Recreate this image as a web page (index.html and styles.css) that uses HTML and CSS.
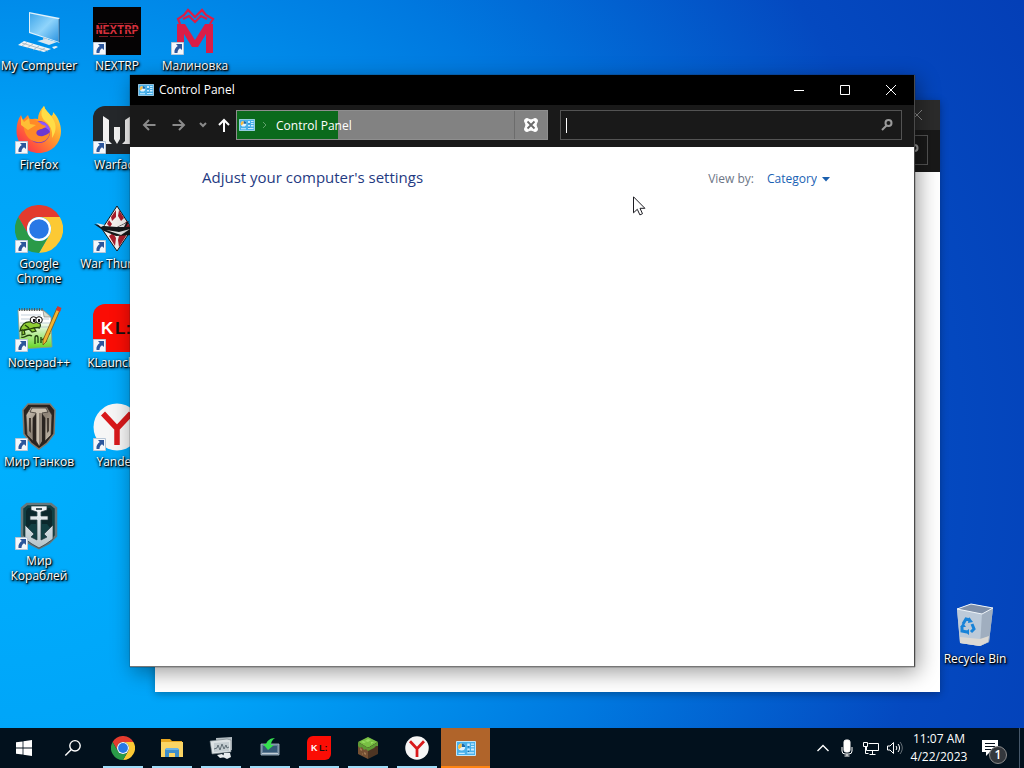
FILE: index.html
```html
<!DOCTYPE html>
<html lang="en">
<head>
    <meta charset="UTF-8">
    <meta name="viewport" content="width=device-width, initial-scale=1.0">
    <title>Control Panel</title>
    <link rel="stylesheet" href="styles.css">
</head>
<body>
    <!-- Shared icons -->
    <svg class="sprite" aria-hidden="true">
        <defs>
            <linearGradient id="screen" x1="0" y1="0" x2="1" y2="1">
                <stop offset="0" stop-color="#3fa6ea"/>
                <stop offset=".5" stop-color="#8fd4fb"/>
                <stop offset="1" stop-color="#2b93e0"/>
            </linearGradient>
            <linearGradient id="flame" x1="1" y1="0" x2="0" y2="1">
                <stop offset="0" stop-color="#fff04a"/>
                <stop offset=".4" stop-color="#ffa02c"/>
                <stop offset=".75" stop-color="#ff4f3f"/>
                <stop offset="1" stop-color="#e3206c"/>
            </linearGradient>
            <linearGradient id="steel" x1="0" y1="0" x2="1" y2="1">
                <stop offset="0" stop-color="#d3cabc"/>
                <stop offset=".5" stop-color="#8d8276"/>
                <stop offset="1" stop-color="#c8bdae"/>
            </linearGradient>
            <linearGradient id="silver" x1="0" y1="0" x2="0" y2="1">
                <stop offset="0" stop-color="#f4f8fa"/>
                <stop offset="1" stop-color="#b3c2c8"/>
            </linearGradient>
            <linearGradient id="page" x1="0" y1="0" x2="0" y2="1">
                <stop offset=".3" stop-color="#ffffff"/>
                <stop offset="1" stop-color="#62d51f"/>
            </linearGradient>
        </defs>
        <symbol id="shortcut" viewBox="0 0 13 13">
            <path fill="#f4f7fb" stroke="#b8c6d6" d="M.5.5h12v12H.5z"/>
            <path fill="#2c569c" d="M5 2h6v6L9 6.200C7 7.500 6.500 9 6.500 11H3.500C3 8 4.500 5.500 6.800 4z"/>
        </symbol>
        <symbol id="chrome" viewBox="0 0 48 48">
            <path fill="#e33b2e" d="M24 12h20.800A24 24 0 0 0 3.200 12l10.400 18A12 12 0 0 1 24 12z"/>
            <path fill="#fcc934" d="M24 12h20.800A24 24 0 0 1 24 48l10.400-18A12 12 0 0 0 24 12z"/>
            <path fill="#2a9a48" d="M3.200 12A24 24 0 0 0 24 48l10.400-18A12 12 0 0 1 13.600 30z"/>
            <circle cx="24" cy="24" r="12" fill="#fff"/>
            <circle cx="24" cy="24" r="9.800" fill="#2878e6"/>
        </symbol>
        <symbol id="yandex" viewBox="0 0 48 48">
            <circle cx="24" cy="24" r="23.500" fill="#f6f6f6"/>
            <path fill="none" stroke="#d8191b" stroke-width="5.500" d="M10 10.500 24 25.500 38 10.500M24 24v18"/>
        </symbol>
        <symbol id="panel" viewBox="0 0 16 12">
            <path fill="#48b0ea" stroke="#bfe6fb" stroke-width=".8" d="M.4.400h15.200v11.200H.4z"/>
            <circle cx="4.500" cy="4.800" r="2.800" fill="#dff3ff"/>
            <path fill="#1667a8" d="M4.500 4.800V2a2.800 2.800 0 0 1 2.800 2.800z"/>
            <path fill="#f4b942" d="M4.500 4.800 2.300 6.600A2.800 2.800 0 0 1 4.500 2z"/>
            <path fill="#c9ebff" d="M9 2h2v2H9zm3 0h2.500v1H12zm0 2h2.500v1H12zM9 6h2v1.500H9zm3 0h2.500v1.500H12zM2 9.300h5v1H2zm7-.3h5.500v1H9z"/>
            <path fill="#1667a8" d="M9.500 4.200h1v1h-1zm0 3.500h1v1h-1z"/>
        </symbol>
        <symbol id="magnifier" viewBox="0 0 14 14">
            <g fill="none" stroke="#9a9a9a" stroke-width="2">
                <circle cx="8.500" cy="5" r="3"/>
                <path d="M6.500 7.500 2 12"/>
            </g>
        </symbol>
    </svg>

    <main class="desktop">
        <div class="icon-columns">
            <div class="icon-column">
                <button class="desktop-icon" type="button">
                    <span class="picture">
                        <svg viewBox="0 0 48 48">
                            <path fill="#dff1fb" d="m14 5 31 6v25L14 26z"/>
                            <path fill="url(#screen)" d="m15 6.500 28.500 5.700v22.600L15 25z"/>
                            <path fill="#1f6ea8" d="M43.500 12.200 45 11v25l-1.500-1.200z"/>
                            <path fill="#b7ccdb" d="m28 30 5 2v3l-5-1.500z"/>
                            <path fill="#dce7ee" d="m22 34 9-2 11 3-8 3z"/>
                            <path fill="#f0f4f6" d="m3 38 6-4 27 8-7 3z"/>
                            <path fill="none" stroke="#9eb2bf" stroke-width=".8" d="m7 36 26 8M12 35.500 7 39m11-2-6 4m12-2-6 4m12-2-6 3"/>
                            <path fill="#e9eff3" d="m37 40 4-1 2 1-4 2z"/>
                        </svg>
                    </span>
                    <span class="label">My Computer</span>
                </button>
                <button class="desktop-icon" type="button">
                    <span class="picture">
                        <svg viewBox="0 0 48 48">
                            <path fill="url(#flame)" d="M29 0c1 4 4 6 7 10 2-1 2-2 2-4 5 5 8 12 8 19 0 13-10 22-22 22S1.500 38 1.500 25C1.500 18 3 13 6 9l2 5 5-5 2 5c4-2 8-1 8-1 0-5 2-9 6-13z"/>
                            <circle cx="24" cy="26" r="11" fill="#6d38d0"/>
                            <path fill="#9059ff" d="M19 17c7-4 17 1 16 9-2-4-6-5-9-5z"/>
                            <path fill="#ff8a27" d="M8 14c4-2 12-2 17 3 2 2 4 2 6 3-1 3-7 3-9 5-2 3 1 6 6 5 4-1 6-3 7-4-1 8-7 11-13 10C13 35 8 27 8 14z"/>
                            <path fill="#ffdd46" d="M29 0c1 4 4 6 7 10 6 7 6 15 1 22 1-8-2-13-7-17-5-5-4-10-1-15z"/>
                            <path fill="#ffbe35" d="M6 11l3 5 5-4 1 6 6 1-8 5-7-5z"/>
                        </svg>
                        <svg class="badge"><use href="#shortcut"/></svg>
                    </span>
                    <span class="label">Firefox</span>
                </button>
                <button class="desktop-icon" type="button">
                    <span class="picture">
                        <svg><use href="#chrome"/></svg>
                        <svg class="badge"><use href="#shortcut"/></svg>
                    </span>
                    <span class="label">Google Chrome</span>
                </button>
                <button class="desktop-icon" type="button">
                    <span class="picture">
                        <svg viewBox="0 0 48 48">
                            <path fill="url(#page)" stroke="#8f9a86" stroke-width=".8" d="M3 6h25l8 7 1 30-32 2z"/>
                            <path fill="#d7dccf" stroke="#777" stroke-width=".6" d="m28 6 1 7h7z"/>
                            <path fill="none" stroke="#555" stroke-dasharray="1 1.500" stroke-width="3" d="M4 5.500h24"/>
                            <path fill="none" stroke="#a9bbcb" stroke-width=".7" d="M6 11h20M6 15h28M5 19h31M5 23h31"/>
                            <path fill="#8fcd35" stroke="#23410d" stroke-width="1.200" d="M5 27c1-6 5-10 11-9 5-2 11 1 9 5l-6 1 2 3-4 1-3-3-5 1 1 4-3 1 0-5z"/>
                            <path fill="none" stroke="#23410d" stroke-width="1.300" d="M7 26c5 2 9-4 18-2M10 21l4 3M6 33c4 2 6-4 11-1"/>
                            <circle cx="18.500" cy="16" r="3.300" fill="#fff" stroke="#111"/>
                            <circle cx="24" cy="16" r="3.300" fill="#fff" stroke="#111"/>
                            <path fill="#111" d="M18 15h2v3h-2zm5 0h2v3h-2z"/>
                            <path fill="none" stroke="#173c08" stroke-width="1.300" d="M20 40v-6c0-3 3-3 3 0v5m3-6v6m1-3c3-3 4-2 4 2m2-7 2-2"/>
                            <path fill="#f2b431" stroke="#7a5313" stroke-width=".8" d="M42 4l3 2-14 32-3 3v-5z"/>
                            <path fill="#d63a2d" d="m42.500 2 4 2-1.500 4-4-2z"/>
                        </svg>
                        <svg class="badge"><use href="#shortcut"/></svg>
                    </span>
                    <span class="label">Notepad++</span>
                </button>
                <button class="desktop-icon" type="button">
                    <span class="picture">
                        <svg viewBox="0 0 48 48">
                            <path fill="#29231f" stroke="#82786c" stroke-width="1.500" d="M13 1h22l5 6-1 24-7 9-8 6-8-6-7-9L8 7z"/>
                            <path fill="url(#steel)" stroke="#2d2722" stroke-width=".7" d="m11 12 5-8h16l5 8-1 20-6 6V15l-3-4h-6l-3 4v23l-6-6z"/>
                            <path fill="#c9bfb0" stroke="#2d2722" stroke-width=".7" d="M17 5h14l2 4-6 1v28l-3 5-3-5V10l-6-1z"/>
                            <path fill="#453c34" d="M14 15h2v15l-2-2zm18 0h2v13l-2 2z"/>
                            <path fill="#8d8276" d="M24 10h3v28l-3 5z"/>
                        </svg>
                        <svg class="badge"><use href="#shortcut"/></svg>
                    </span>
                    <span class="label">Мир Танков</span>
                </button>
                <button class="desktop-icon" type="button">
                    <span class="picture">
                        <svg viewBox="0 0 48 48">
                            <path fill="#123f43" stroke="#66777b" stroke-width="2.500" d="M12 2h24l5 4v28l-7 7-10 5-10-5-7-7V6z"/>
                            <path fill="#0b282c" d="M13 6h8v16h-5l-5 6V9zm22 0h-8v16h5l5 6V9z"/>
                            <path fill="url(#silver)" stroke="#22373d" stroke-width=".7" d="M16 4h16v4l-6 2v4h7v4h-7v20l6-3-3-3 9-9v14l-7 5-7 4-7-4-7-5V23l9 9-3 3 6 3V18h-7v-4h7v-4l-6-2z"/>
                            <path fill="#44565c" d="M21 6h6v2h-6z"/>
                        </svg>
                        <svg class="badge"><use href="#shortcut"/></svg>
                    </span>
                    <span class="label">Мир Кораблей</span>
                </button>
            </div>

            <div class="icon-column">
                <button class="desktop-icon" type="button">
                    <span class="picture">
                        <svg viewBox="0 0 48 48">
                            <path fill="#050304" d="M0 0h48v48H0z"/>
                            <text x="24" y="27" text-anchor="middle" font-family="Liberation Mono, monospace" font-size="12" font-weight="700" fill="#d6303c">NEXTRP</text>
                            <path fill="none" stroke="#7d1a22" stroke-dasharray="9 2 14 1" d="M5 16.500h38M6 29.500h37"/>
                            <path fill="none" stroke="#050304" stroke-width=".7" d="M3 22.500h42"/>
                        </svg>
                        <svg class="badge"><use href="#shortcut"/></svg>
                    </span>
                    <span class="label">NEXTRP</span>
                </button>
                <button class="desktop-icon" type="button">
                    <span class="picture">
                        <svg viewBox="0 0 48 48">
                            <path fill="#25282b" d="M12 0h36v48H0V12A12 12 0 0 1 12 0z"/>
                            <path fill="#f1f1f1" d="m10 10 6 4v21l3 3H10zM38 10l-6 4v21l-3 3h9zM21 21h6v12l-3 5-3-5z"/>
                        </svg>
                        <svg class="badge"><use href="#shortcut"/></svg>
                    </span>
                    <span class="label">Warface</span>
                </button>
                <button class="desktop-icon" type="button">
                    <span class="picture">
                        <svg viewBox="0 0 48 48">
                            <path fill="#f4f1ef" stroke="#181516" d="m24 1 15 23-15 22L9 24z"/>
                            <path fill="#a61c2b" d="m23 5 0 7-4 4-1-4zm3 0 5 8-3 3-3-5zM14 19l2-4 3 4-2 3zm20-3 3 6-4 2-3-4zM16 31l4-3 3 5-1 8zm10 0 6-3 1 3-7 11-1-7z"/>
                            <path fill="#15171a" d="m1 19 10 2 13 1 12-6-3 6 15-2v7l-8 3-17 1-12-5z"/>
                            <path fill="#e5e5e5" d="m3 18 9 2-4 2zm10 7 13 2 11-3-9 6zM25 22l8-4-2 4z"/>
                        </svg>
                        <svg class="badge"><use href="#shortcut"/></svg>
                    </span>
                    <span class="label">War Thunder</span>
                </button>
                <button class="desktop-icon" type="button">
                    <span class="picture">
                        <svg viewBox="0 0 48 48">
                            <path fill="#fb0d05" d="M12 0h36v36a12 12 0 0 1-12 12H0V12A12 12 0 0 1 12 0z"/>
                            <text x="8" y="30" font-family="Liberation Sans, sans-serif" font-size="17" font-weight="700" fill="#fff">K <tspan x="22" fill="#16100f">L:</tspan></text>
                        </svg>
                        <svg class="badge"><use href="#shortcut"/></svg>
                    </span>
                    <span class="label">KLauncher</span>
                </button>
                <button class="desktop-icon" type="button">
                    <span class="picture">
                        <svg><use href="#yandex"/></svg>
                        <svg class="badge"><use href="#shortcut"/></svg>
                    </span>
                    <span class="label">Yandex</span>
                </button>
            </div>

            <div class="icon-column">
                <button class="desktop-icon" type="button">
                    <span class="picture">
                        <svg viewBox="0 0 48 48">
                            <path fill="#d91e48" d="M6 17h8l10 16 10-16h8v29h-7V27l-8 13h-6l-8-13v19H6z"/>
                            <path fill="none" stroke="#d91e48" stroke-width="2.200" d="M9 17 7 12l6-4 4-5 7 7 7-7 4 5 7 4-3 5M12 12l6-3 6 6 6-6 6 3"/>
                        </svg>
                        <svg class="badge"><use href="#shortcut"/></svg>
                    </span>
                    <span class="label">Малиновка</span>
                </button>
            </div>
        </div>

        <button class="desktop-icon recycle-bin" type="button">
            <span class="picture">
                <svg viewBox="0 0 48 48">
                    <path fill="#b9c5d2" d="m6 9 14-5 22 4-4 34-9 4-20-3z"/>
                    <path fill="#8090a8" d="m6 9 14-5 22 4-11 6z"/>
                    <path fill="#bccad9" d="m6 9 25 5-2 32-20-3z"/>
                    <path fill="#a0aebf" d="m31 14 11-6-4 34-9 4z"/>
                    <path fill="#dcd9d4" d="m9 37 20 2 9-3-1 6-8 4-20-3z"/>
                    <path fill="none" stroke="#edf3f8" d="m6 9 14-5 22 4-11 6z"/>
                    <path fill="none" stroke="#1883d8" stroke-width="3" d="m12 24 3-5 4 1m2 4 2 5-3 3m-4 0-5-1 0-4"/>
                    <path fill="#1883d8" d="m18 17 4 5-5 1zm0 12v6l-4-3zm-9-2 3-4 3 4z"/>
                </svg>
            </span>
            <span class="label">Recycle Bin</span>
        </button>

        <!-- Window behind -->
        <section class="window window-back" aria-hidden="true">
            <header class="titlebar">
                <svg class="glyph" viewBox="0 0 12 12"><path d="m1 1 10 10M11 1 1 11"/></svg>
            </header>
            <div class="navbar">
                <div class="search"><svg class="search-icon"><use href="#magnifier"/></svg></div>
            </div>
        </section>

        <!-- Control Panel window -->
        <section class="window window-front">
            <header class="titlebar">
                <svg class="panel-icon"><use href="#panel"/></svg>
                <h1 class="title">Control Panel</h1>
                <div class="window-controls">
                    <button type="button" aria-label="Minimize"><svg class="glyph" viewBox="0 0 12 12"><path d="M1 6.500h10"/></svg></button>
                    <button type="button" aria-label="Maximize"><svg class="glyph" viewBox="0 0 12 12"><path d="M1.500 1.500h9v9h-9z"/></svg></button>
                    <button type="button" aria-label="Close"><svg class="glyph" viewBox="0 0 12 12"><path d="m1 1 10 10M11 1 1 11"/></svg></button>
                </div>
            </header>
            <nav class="navbar">
                <div class="nav-buttons">
                    <button type="button" aria-label="Back"><svg viewBox="0 0 14 14"><path d="M13.500 7H2m5-5L2 7l5 5"/></svg></button>
                    <button type="button" aria-label="Forward"><svg viewBox="0 0 14 14"><path d="M.5 7H12M7 2l5 5-5 5"/></svg></button>
                    <button class="recent" type="button" aria-label="Recent locations"><svg viewBox="0 0 14 14"><path d="m4 5 3 3 3-3"/></svg></button>
                    <button class="up" type="button" aria-label="Up"><svg viewBox="0 0 14 14"><path d="M7 14V2M2 7l5-5 5 5"/></svg></button>
                </div>
                <div class="address">
                    <div class="crumbs">
                        <svg class="panel-icon"><use href="#panel"/></svg>
                        <svg class="crumb-arrow" viewBox="0 0 6 8"><path d="m1 1 3 3-3 3"/></svg>
                        <a href="#">Control Panel</a>
                    </div>
                    <button class="stop" type="button" aria-label="Stop loading">
                        <svg viewBox="0 0 16 16">
                            <path fill="#fff" d="M4 1.500 8 3l4-1.500A2.500 2.500 0 0 1 14.500 4L13 8l1.500 4a2.500 2.500 0 0 1-2.500 2.500L8 13l-4 1.500A2.500 2.500 0 0 1 1.500 12L3 8 1.500 4A2.500 2.500 0 0 1 4 1.500z" stroke="#fff" stroke-linejoin="round"/>
                            <path fill="none" stroke="#6c6c6c" stroke-width="1.800" d="m4.500 4.500 7 7m0-7-7 7"/>
                        </svg>
                    </button>
                </div>
                <div class="search">
                    <span class="caret"></span>
                    <input type="text" aria-label="Search Control Panel">
                    <svg class="search-icon"><use href="#magnifier"/></svg>
                </div>
            </nav>
            <div class="content">
                <h2>Adjust your computer's settings</h2>
                <div class="view-by">
                    <label for="view">View by:</label>
                    <span class="view-select">
                        <select id="view">
                            <option>Category</option>
                        </select>
                        <svg viewBox="0 0 8 5"><path fill="#1a5fae" d="M0 0h8L4 4.500z"/></svg>
                    </span>
                </div>
            </div>
        </section>

        <svg class="cursor" viewBox="0 0 13 20">
            <path fill="#fff" stroke="#1c1c22" d="M.5.800v16l3.800-3.500 2.600 5.600 2.600-1.200-2.500-5.400h4.900z"/>
        </svg>
    </main>

    <footer class="taskbar">
        <button class="start" type="button" aria-label="Start">
            <svg width="16" height="16" viewBox="0 0 16 16"><path fill="#fff" d="m0 2.300 6.600-.9v6.200H0zM7.400 1.300 16 0v7.600H7.400zM0 8.400h6.600v6.200L0 13.700zm7.400 0H16V16l-8.600-1.200z"/></svg>
        </button>
        <button class="find" type="button" aria-label="Search">
            <svg width="18" height="18" viewBox="0 0 18 18"><g fill="none" stroke="#fff" stroke-width="1.400"><circle cx="11" cy="6.800" r="5.200"/><path d="m7.300 10.500-6 6"/></g></svg>
        </button>
        <button class="app" type="button" aria-label="Google Chrome">
            <svg width="24" height="24"><use href="#chrome"/></svg>
        </button>
        <button class="app" type="button" aria-label="File Explorer">
            <svg width="24" height="24" viewBox="0 0 24 24">
                <path fill="#e9a820" d="M1 3h9l2 2h10v4H1z"/>
                <path fill="#fbd564" d="M1 6h22v15H1z"/>
                <path fill="#3f8fcb" d="M5 13h14v8h-4v-4H9v4H5z"/>
                <path fill="#6db4e4" d="M6 12h12l1 2H5z"/>
            </svg>
        </button>
        <button class="app" type="button" aria-label="System Monitor">
            <svg width="24" height="24" viewBox="0 0 24 24">
                <path fill="#b5bec3" d="m7 2 16-1v13l-15 1z"/>
                <path fill="#dce2e4" stroke="#6f7a80" stroke-width=".6" d="m1 5 17-2 4 1v12L3 18z"/>
                <path fill="#c4cdd1" d="m5 7 15-1v9L5 16z"/>
                <path fill="none" stroke="#56646c" stroke-width=".9" d="m5 13 3-1 1-3 2 5 2-6 2 5 2-4 1 3 2-1"/>
                <path fill="#e8ecee" d="m8 19 5-1 3 3-5 1zm7-2h6l1 4-4 2-4-2z"/>
            </svg>
        </button>
        <button class="app" type="button" aria-label="Installer">
            <svg width="24" height="24" viewBox="0 0 24 24">
                <path fill="#657f96" stroke="#b0c0cd" stroke-width=".8" d="M3 8h18v11H3z"/>
                <path fill="#375a78" d="M5 10h14v6H5z"/>
                <path fill="#c3ced6" d="M4 17h16v1H4z"/>
                <path fill="#35e04f" d="M17 2c-3 2-4 4-4 7h3l-6 5-5-6h3c1-3 4-6 9-6z"/>
            </svg>
        </button>
        <button class="app" type="button" aria-label="KLauncher">
            <svg width="24" height="24" viewBox="0 0 48 48">
                <path fill="#fb0d05" d="M12 0h36v36a12 12 0 0 1-12 12H0V12A12 12 0 0 1 12 0z"/>
                <text x="8" y="30" font-family="Liberation Sans, sans-serif" font-size="18" font-weight="700" fill="#fff">K <tspan x="24" fill="#16100f">L:</tspan></text>
            </svg>
        </button>
        <button class="app" type="button" aria-label="Minecraft">
            <svg width="24" height="24" viewBox="0 0 24 24">
                <path fill="#79c044" d="m12 1 10 5-10 6L2 6z"/>
                <path fill="#765033" d="m2 6 10 6v11L2 18z"/>
                <path fill="#4e3523" d="m22 6-10 6v11l10-5z"/>
                <path fill="#5e9a34" d="m2 6 10 6v3l-2-2-2 1-2-3-2 1-2-2zM22 6l-10 6v3l2-1 2-1 2-1 2-2 2 0z"/>
                <path fill="#a07a54" d="m4 12 2 1v2l-2-1zm4 4 2 1v2l-2-1zM6 17l1 1v1l-1-1z"/>
                <path fill="#98dc62" d="m12 3 3 1-3 2-3-1zm-5 2 3 1-2 1-3-1zm8 1 3 0-3 2z"/>
            </svg>
        </button>
        <button class="app" type="button" aria-label="Yandex">
            <svg width="24" height="24"><use href="#yandex"/></svg>
        </button>
        <button class="app active" type="button" aria-label="Control Panel">
            <svg width="20" height="15"><use href="#panel"/></svg>
        </button>

        <div class="tray">
            <button type="button" aria-label="Show hidden icons"><svg width="14" height="18" viewBox="0 0 14 18"><path stroke-width="1.400" d="m1.500 12 5.500-5.500 5.500 5.500"/></svg></button>
            <button type="button" aria-label="Microphone"><svg width="14" height="18" viewBox="0 0 14 18"><rect x="4" y="1" width="6" height="12" rx="2" fill="#fff"/><path d="M2 8v4a3 3 0 0 0 3 3h4a3 3 0 0 0 3-3V8M7 15v2M4.500 17h5"/></svg></button>
            <button type="button" aria-label="Network"><svg width="18" height="18" viewBox="0 0 18 18"><path d="M6.500 4.500h10v7H4.500V8M1.500 3.500h4v4h-4zM3.500 7.500v7h3M10.500 12v3M7.500 15.500h6"/></svg></button>
            <button type="button" aria-label="Volume"><svg width="18" height="18" viewBox="0 0 18 18"><path d="M1.500 7v4H4l3.500 3.500v-11L4 7zM10 7c1 1.300 1 2.700 0 4M12 5c2 2.500 2 5.500 0 8"/><path opacity=".4" d="M14 3c3 4 3 8 0 12"/></svg></button>
            <time class="clock" datetime="2023-04-22T11:07"><span>11:07 AM</span><span>4/22/2023</span></time>
            <button class="notifications" type="button" aria-label="Notifications, 1 new">
                <svg width="18" height="18" viewBox="0 0 18 18"><path fill="#fff" stroke="none" d="M1 1h16v12h-8l-4 4v-4H1z"/><path stroke="#04101c" d="M4 4.500h10M4 7.500h10M4 10.500h7"/></svg>
                <span class="count">1</span>
            </button>
        </div>
    </footer>
</body>
</html>
```

FILE: styles.css
```css
* {
    margin: 0;
    padding: 0;
    box-sizing: border-box;
}

body {
    font-family: 'Open Sans', 'Noto Sans', sans-serif;
    font-size: 12px;
    min-height: 100vh;
    display: flex;
    flex-direction: column;
    overflow: hidden;
    background: radial-gradient(ellipse 115% 140% at 0 60%, #00b0fe 0%, #00a4f8 28%, #0078df 55%, #0449c0 80%, #043db5 100%);
}

button {
    border: none;
    background: none;
    color: inherit;
    font: inherit;
    cursor: default;
}

svg {
    display: block;
}

.sprite {
    position: absolute;
    width: 0;
    height: 0;
}

/* Desktop */
.desktop {
    flex: 1;
    position: relative;
}

.icon-columns {
    display: flex;
    align-items: flex-start;
}

.icon-column {
    width: 78px;
    display: flex;
    flex-direction: column;
}

.desktop-icon {
    width: 78px;
    height: 99px;
    padding-top: 7px;
    display: flex;
    flex-direction: column;
    align-items: center;
    gap: 3px;
}

.picture {
    position: relative;
    width: 48px;
    height: 48px;
}

.picture svg {
    width: 48px;
    height: 48px;
}

.picture .badge {
    position: absolute;
    left: 0;
    bottom: 0;
    width: 13px;
    height: 13px;
}

.label {
    color: white;
    line-height: 15px;
    text-align: center;
    text-shadow: 1px 1px 1px #000, 1px 1px 3px #000, 0 1px 3px rgba(0, 0, 0, 0.8);
}

.recycle-bin {
    position: absolute;
    right: 10px;
    bottom: 36px;
}

/* Windows */
.window {
    position: absolute;
    width: 785px;
    height: 592px;
    display: flex;
    flex-direction: column;
    background: white;
    color: white;
}

.window-front {
    left: 130px;
    top: 75px;
    border-right: 1px solid #4a4a4a;
    border-bottom: 1px solid #777;
    box-shadow: 0 0 1px #222, 3px 5px 20px rgba(0, 0, 0, 0.4);
}

.window-back {
    left: 155px;
    top: 100px;
    box-shadow: 0 2px 8px rgba(0, 0, 0, 0.3);
}

.titlebar {
    height: 30px;
    display: flex;
    align-items: center;
    background: black;
    padding-left: 8px;
}

.window-back .titlebar {
    background: #2b2b2b;
    justify-content: flex-end;
    padding-right: 17px;
}

.title {
    flex: 1;
    margin-left: 5px;
    padding-bottom: 2px;
    font-size: 12px;
    font-weight: 400;
}

.panel-icon {
    width: 16px;
    height: 12px;
}

.window-controls {
    display: flex;
}

.window-controls button {
    width: 46px;
    height: 28px;
    display: flex;
    align-items: center;
    justify-content: center;
}

.glyph {
    width: 12px;
    height: 12px;
    fill: none;
    stroke: white;
}

.window-back .glyph {
    stroke: #8a8a8a;
}

.navbar {
    height: 42px;
    display: flex;
    align-items: center;
    background: #191919;
    padding: 0 12px 2px 4px;
}

.nav-buttons {
    display: flex;
    align-items: center;
}

.nav-buttons button {
    width: 30px;
    height: 30px;
    display: flex;
    align-items: center;
    justify-content: center;
}

.nav-buttons .recent {
    width: 17px;
}

.nav-buttons .up {
    width: 25px;
}

.nav-buttons svg {
    width: 14px;
    height: 14px;
    flex: none;
    fill: none;
    stroke: #8a8a8a;
    stroke-width: 2;
}

.nav-buttons .up svg {
    stroke: white;
}

.address {
    width: 312px;
    height: 30px;
    display: flex;
    border: 1px solid #8e8e8e;
    background: linear-gradient(to right, #0b6a1c 0, #0b6a1c 101px, #828282 101px);
}

.crumbs {
    flex: 1;
    display: flex;
    align-items: center;
    padding-left: 2px;
}

.crumb-arrow {
    width: 6px;
    height: 8px;
    margin: 0 8px 0 7px;
    fill: none;
    stroke: #5fa06a;
}

.crumbs a {
    color: white;
    text-decoration: none;
}

.stop {
    width: 33px;
    display: flex;
    align-items: center;
    justify-content: center;
    border-left: 1px solid #6c6c6c;
}

.stop svg {
    width: 16px;
    height: 16px;
}

.search {
    flex: 1;
    height: 30px;
    margin-left: 12px;
    padding: 0 7px 0 5px;
    display: flex;
    align-items: center;
    border: 1px solid #535353;
}

.window-back .search {
    justify-content: flex-end;
}

.caret {
    width: 1px;
    height: 15px;
    background: white;
}

.search input {
    flex: 1;
    min-width: 0;
    height: 28px;
    border: none;
    outline: none;
    background: transparent;
    color: white;
    font: inherit;
}

.search-icon {
    width: 14px;
    height: 14px;
}

.content {
    flex: 1;
    display: flex;
    align-items: flex-start;
    justify-content: space-between;
    padding: 19px 84px 0 72px;
}

.content h2 {
    font-size: 15px;
    font-weight: 400;
    line-height: 22px;
    color: #1f3a82;
}

.view-by {
    display: flex;
    align-items: center;
    gap: 13px;
    line-height: 26px;
    color: #6d7585;
}

.view-select {
    display: flex;
    align-items: center;
    gap: 5px;
}

.view-select select {
    appearance: none;
    border: none;
    background: none;
    font: inherit;
    color: #1a62b4;
}

.view-select svg {
    width: 8px;
    height: 5px;
}

.cursor {
    position: absolute;
    left: 633px;
    top: 196px;
    width: 13px;
    height: 20px;
}

/* Taskbar */
.taskbar {
    height: 40px;
    display: flex;
    background: #02111d;
    color: white;
}

.taskbar button {
    display: flex;
    align-items: center;
    justify-content: center;
}

.start {
    width: 48px;
}

.find {
    width: 50px;
}

.app {
    width: 49px;
    position: relative;
}

.app::after {
    content: '';
    position: absolute;
    left: 5px;
    right: 4px;
    bottom: 0;
    height: 2px;
    background: #9fdcf8;
}

.app.active {
    background: #b0642a;
}

.app.active::after {
    left: 0;
    right: 0;
    background: #ff8412;
}

.tray {
    margin-left: auto;
    margin-right: 4px;
    padding-right: 10px;
    display: flex;
    align-items: center;
    border-right: 1px solid #46586a;
}

.tray button {
    width: 24px;
    height: 40px;
}

.tray svg {
    fill: none;
    stroke: white;
}

.clock {
    width: 64px;
    display: flex;
    flex-direction: column;
    align-items: center;
    line-height: 18px;
}

.tray .notifications {
    width: 38px;
    position: relative;
}

.count {
    position: absolute;
    right: 2px;
    bottom: 4px;
    width: 18px;
    height: 18px;
    border: 1px solid #8b8b8b;
    border-radius: 50%;
    background: #33373c;
    font-size: 12px;
    font-weight: 600;
    line-height: 16px;
    text-align: center;
}
```
